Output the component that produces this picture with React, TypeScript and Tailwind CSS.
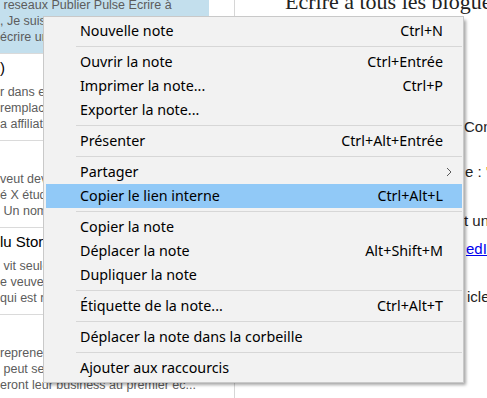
import React from "react";

type Item =
  | { sep: true }
  | { sep?: false; label: string; sc?: string; sub?: boolean; active?: boolean };

const items: Item[] = [
  { label: "Nouvelle note", sc: "Ctrl+N" },
  { sep: true },
  { label: "Ouvrir la note", sc: "Ctrl+Entrée" },
  { label: "Imprimer la note...", sc: "Ctrl+P" },
  { label: "Exporter la note..." },
  { sep: true },
  { label: "Présenter", sc: "Ctrl+Alt+Entrée" },
  { sep: true },
  { label: "Partager", sub: true },
  { label: "Copier le lien interne", sc: "Ctrl+Alt+L", active: true },
  { sep: true },
  { label: "Copier la note" },
  { label: "Déplacer la note", sc: "Alt+Shift+M" },
  { label: "Dupliquer la note" },
  { sep: true },
  { label: "Étiquette de la note...", sc: "Ctrl+Alt+T" },
  { sep: true },
  { label: "Déplacer la note dans la corbeille" },
  { sep: true },
  { label: "Ajouter aux raccourcis" },
];

type Note = { title: string; lines: string[]; selected?: boolean };

const notes: Note[] = [
  {
    title: "Écrire à tous les blogueurs",
    lines: [
      " reseaux Publier Pulse Ecrire à",
      ", Je suis un blogueur passionné qui",
      "écrire un article invité sur votre",
    ],
    selected: true,
  },
  {
    title: ")",
    lines: [
      "r dans eux-mêmes avant de se lancer",
      "remplacer leur salaire grâce à un",
      "a affiliation et aux produits numériques",
    ],
  },
  {
    title: "",
    lines: [
      "veut devenir indépendant et libre",
      "é X étudie les méthodes des autres",
      " Un nombre croissant de lecteurs",
    ],
  },
  {
    title: "lu Storytelling",
    lines: [
      " vit seule depuis des années dans",
      "e veuve raconte son histoire à ceux",
      "qui est resté fidèle à son rêve",
    ],
  },
  {
    title: "",
    lines: [
      "repreneurs qui veulent réussir",
      " peut servir de modèle à ceux qui",
      "eront leur business au premier ec...",
    ],
  },
];

function Chevron() {
  return (
    <svg width="6" height="10" viewBox="0 0 6 10" className="shrink-0">
      <path d="M1 1 L5 5 L1 9" fill="none" stroke="#5a5a5a" strokeWidth="1" />
    </svg>
  );
}

export default function App() {
  return (
    <div className="relative w-[487px] h-[398px] overflow-hidden bg-white flex font-['Liberation_Sans',Arial,sans-serif]">
      {/* Note list */}
      <div className="w-[235px] shrink-0 border-r border-[#d6d6d6] overflow-hidden flex flex-col">
        {notes.map((n, i) => (
          <div
            key={i}
            className={`w-[209px] h-[87px] shrink-0 border-b border-[#dadada] pt-[5px] flex flex-col ${
              n.selected ? "bg-[#c3dfed] -mt-[33px]" : ""
            }`}
          >
            <div className="h-[18px] leading-[18px] text-[15px] text-black whitespace-pre overflow-hidden">
              {n.title}
            </div>
            <div className="mt-[7px] flex flex-col">
              {n.lines.map((l, j) => (
                <div
                  key={j}
                  className="h-[16px] leading-[16px] text-[12.5px] text-[#5c5c5c] whitespace-pre overflow-hidden"
                >
                  {l}
                </div>
              ))}
            </div>
          </div>
        ))}
      </div>

      {/* Editor */}
      <div className="flex-1 flex flex-col pl-[50px] overflow-hidden">
        <div className="-mt-[10px] h-[24px] leading-[24px] text-[22px] text-[#222] whitespace-nowrap font-['Liberation_Serif',Georgia,serif]">
          Écrire à tous les blogueurs
        </div>
        <div className="mt-[103px] h-[20px] leading-[20px] text-[15px] text-[#222] whitespace-nowrap flex">
          <span className="w-[179px] shrink-0 overflow-hidden">Introduction et </span>
          <span>Contenu</span>
        </div>
        <div className="mt-[25px] h-[20px] leading-[20px] text-[15px] text-[#222] whitespace-nowrap flex">
          <span className="w-[180px] shrink-0 overflow-hidden">Sujet de l'articl</span>
          <span>
            e : <span className="text-[#c9a032]">'</span>Titre
          </span>
        </div>
        <div className="mt-[29px] h-[20px] leading-[20px] text-[15px] text-[#222] whitespace-nowrap flex">
          <span className="w-[179px] shrink-0 overflow-hidden">Je vous propose d'écrire</span>
          <span>t un article</span>
        </div>
        <div className="mt-[8px] h-[20px] leading-[20px] text-[15px] whitespace-nowrap flex">
          <span className="w-[181px] shrink-0 overflow-hidden text-[#222]">Mon profil Link</span>
          <span className="text-[#0000ee] underline">edIn</span>
        </div>
        <div className="mt-[28px] h-[20px] leading-[20px] text-[15px] text-[#222] whitespace-nowrap flex">
          <span className="w-[182px] shrink-0 overflow-hidden">Idées d'art</span>
          <span>icle</span>
        </div>
      </div>

      {/* Context menu */}
      <div className="absolute left-[43px] top-[16px] w-[421px] bg-[#f2f2f2] border border-[#c9c9c9] shadow-[3px_3px_3px_-1px_rgba(0,0,0,0.35)] pl-[2px] pr-[1px] py-[2px] font-['Noto_Sans',sans-serif] text-[14.3px] text-black">
        {items.map((it, i) =>
          it.sep ? (
            <div key={i} className="h-[7px] flex items-center pl-[30px]">
              <div className="h-px w-full bg-[#d7d7d7]" />
            </div>
          ) : (
            <div
              key={i}
              className={`h-[24px] flex items-center justify-between pl-[34px] whitespace-nowrap ${
                it.sub ? "pr-[10px]" : "pr-[19px]"
              } ${it.active ? "bg-[#91c9f7]" : ""}`}
            >
              <span>{it.label}</span>
              {it.sc && <span>{it.sc}</span>}
              {it.sub && <Chevron />}
            </div>
          )
        )}
      </div>
    </div>
  );
}
